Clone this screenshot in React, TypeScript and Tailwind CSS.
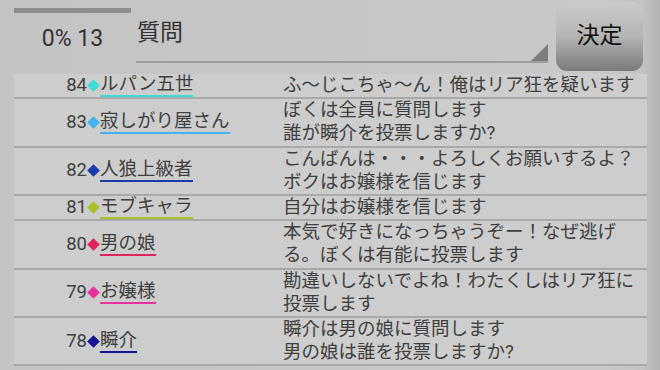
import React from 'react';

interface Post {
  no: number;
  name: string;
  color: string;
  lines: string[];
}

const posts: Post[] = [
  { no: 84, name: 'ルパン五世', color: 'bg-[#3fdcd6]', lines: ['ふ〜じこちゃ〜ん！俺はリア狂を疑います'] },
  { no: 83, name: '寂しがり屋さん', color: 'bg-[#42b2f0]', lines: ['ぼくは全員に質問します', '誰が瞬介を投票しますか?'] },
  { no: 82, name: '人狼上級者', color: 'bg-[#1a3caa]', lines: ['こんばんは・・・よろしくお願いするよ？', 'ボクはお嬢様を信じます'] },
  { no: 81, name: 'モブキャラ', color: 'bg-[#a6c12a]', lines: ['自分はお嬢様を信じます'] },
  { no: 80, name: '男の娘', color: 'bg-[#e0245c]', lines: ['本気で好きになっちゃうぞー！なぜ逃げる。ぼくは有能に投票します'] },
  { no: 79, name: 'お嬢様', color: 'bg-[#e732a0]', lines: ['勘違いしないでよね！わたくしはリア狂に投票します'] },
  { no: 78, name: '瞬介', color: 'bg-[#15149a]', lines: ['瞬介は男の娘に質問します', '男の娘は誰を投票しますか?'] },
];

const borderFor: { [key: string]: string } = {
  'bg-[#3fdcd6]': 'border-[#3fdcd6]',
  'bg-[#42b2f0]': 'border-[#42b2f0]',
  'bg-[#1a3caa]': 'border-[#1a3caa]',
  'bg-[#a6c12a]': 'border-[#a6c12a]',
  'bg-[#e0245c]': 'border-[#e0245c]',
  'bg-[#e732a0]': 'border-[#e732a0]',
  'bg-[#15149a]': 'border-[#15149a]',
};

const PostRow: React.FC<{ post: Post }> = ({ post }) => (
  <div className="flex border-b-2 border-[#a9a9a9] bg-[#cdcdcd] leading-[23.2px]">
    <div className="w-[269px] shrink-0 flex items-center pl-[52px]">
      <span className="w-[21px] text-right">{post.no}</span>
      <span className="w-[13px] flex justify-center">
        <span className={`block w-[9px] h-[9px] rotate-45 ${post.color}`} />
      </span>
      <span className={`leading-[21px] border-b-2 ${borderFor[post.color]}`}>{post.name}</span>
    </div>
    <div className="w-[364px]">
      {post.lines.map((l, i) => (
        <div key={i}>{l}</div>
      ))}
    </div>
  </div>
);

export default function App() {
  return (
    <div
      className="w-[660px] h-[370px] overflow-hidden bg-[linear-gradient(to_right,#c4c4c4_0%,#c8c8c8_90%,#c4c4c4_97%,#b3b3b3_100%)] text-[#404040]"
      style={{ fontFamily: 'Roboto, "Noto Sans CJK JP", sans-serif' }}
    >
      {/* header */}
      <div className="flex h-[74px] pl-[14px]">
        <div className="w-[117px] flex flex-col">
          <div className="mt-[8px] h-[4.5px] bg-[#8d8d8d]" />
          <div className="mt-[13px] text-center text-[23px] leading-[25px] text-[#333]">0% 13</div>
        </div>
        <div className="relative ml-[5px] w-[412px] h-[63px] border-b-2 border-[#9c9c9c]">
          <div className="pl-[1px] pt-[19px] text-[23px] leading-[27px] text-[#333]">質問</div>
          <div className="absolute right-0 bottom-0 w-0 h-0 border-l-[17px] border-l-transparent border-b-[17px] border-b-[#7c7c7c]" />
        </div>
        <button className="ml-[8px] mt-[2px] w-[87px] h-[69px] rounded-[11px] bg-gradient-to-b from-[#cbcbcb] via-[#b4b4b4] to-[#7a7a7a] text-[23px] text-[#111]">
          決定
        </button>
      </div>

      {/* list */}
      <div className="ml-[14px] w-[633px] text-[18.5px]">
        {posts.map((p) => (
          <PostRow key={p.no} post={p} />
        ))}
      </div>
    </div>
  );
}
